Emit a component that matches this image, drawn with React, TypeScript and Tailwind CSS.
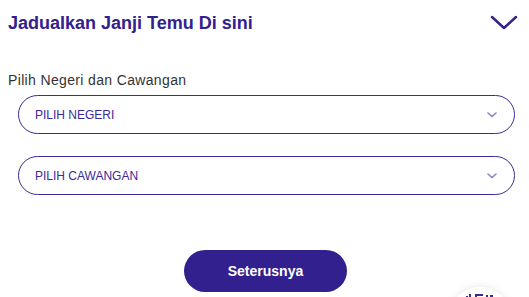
import React, { useState } from 'react';

const PURPLE = '#33208f';

const SmallChevron = () => (
  <svg width="10" height="6" viewBox="0 0 10 6" fill="none">
    <path d="M1 1l4 3.5L9 1" stroke="#8b80c9" strokeWidth="1.6" strokeLinecap="round" strokeLinejoin="round" />
  </svg>
);

interface SelectBoxProps {
  placeholder: string;
  className?: string;
}

const SelectBox: React.FC<SelectBoxProps> = ({ placeholder, className }) => (
  <button
    type="button"
    className={`ml-[10px] w-[497px] h-[39px] rounded-full border-[1.5px] border-[#3a2b9a] bg-white flex items-center justify-between pl-[16px] pr-[17px] ${className ?? ''}`}
  >
    <span className="text-[12px] leading-none text-[#3a2a9a]">{placeholder}</span>
    <SmallChevron />
  </button>
);

export default function App() {
  const [open, setOpen] = useState(true);

  return (
    <div
      className="relative h-[297px] w-full overflow-hidden bg-white"
      style={{ fontFamily: '"Liberation Sans", Arial, sans-serif' }}
    >
      <div className="px-2">
        {/* Header */}
        <div className="flex items-start justify-between pt-[9px]">
          <h1 className="text-[18px] leading-[28px] font-bold text-[#33208f]">Jadualkan Janji Temu Di sini</h1>
          <button type="button" onClick={() => setOpen(!open)} className="mt-[6px] mr-[3px]">
            <svg width="28" height="16" viewBox="0 0 28 16" fill="none">
              <path d="M2 2l12 11L26 2" stroke={PURPLE} strokeWidth="2.4" strokeLinecap="round" strokeLinejoin="round" />
            </svg>
          </button>
        </div>

        {open && (
          <div>
            <p className="mt-[33px] text-[14px] leading-[20px] text-[#333333] tracking-[0.35px]">Pilih Negeri dan Cawangan</p>
            <SelectBox placeholder="PILIH NEGERI" className="mt-[5px]" />
            <SelectBox placeholder="PILIH CAWANGAN" className="mt-[22px]" />

            <div className="flex justify-center mt-[55px]">
              <button
                type="button"
                className="ml-[2px] w-[163px] h-[42px] rounded-full bg-[#33208f] text-white text-[14px] font-bold flex items-center justify-center"
              >
                Seterusnya
              </button>
            </div>
          </div>
        )}
      </div>

      {/* floating chat widget peeking in */}
      <div className="absolute left-[449px] top-[287px] w-[62px] h-[62px] rounded-full bg-white shadow-[0_0_8px_rgba(0,0,0,0.10)] flex justify-center pt-[7px]">
        <svg width="28" height="6" viewBox="0 0 28 6" fill="#3a2b9a">
          <rect x="0" y="2" width="2" height="4" />
          <rect x="3" y="0" width="2" height="6" />
          <rect x="9" y="0" width="8" height="2" />
          <rect x="9" y="0" width="2" height="6" />
          <rect x="20" y="1" width="2" height="5" />
          <rect x="24" y="1" width="3" height="5" />
        </svg>
      </div>
    </div>
  );
}
